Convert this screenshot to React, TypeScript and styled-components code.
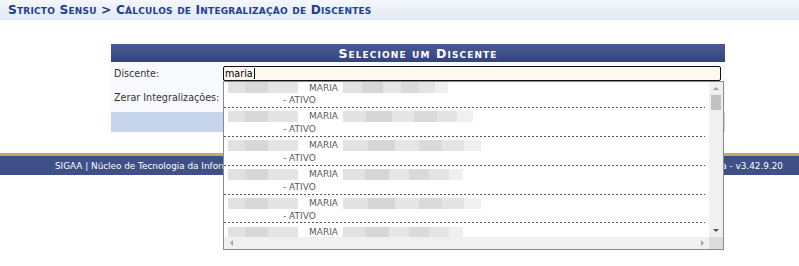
import React from 'react';
import styled, { createGlobalStyle } from 'styled-components';

const GlobalStyle = createGlobalStyle`
  html, body { margin: 0; padding: 0; background: #fff; }
  body {
    font-family: "DejaVu Sans", Verdana, sans-serif;
    font-size: 9.6px;
    color: #222;
  }
`;

const Page = styled.div`
  width: 799px;
  height: 266px;
  overflow: hidden;
  display: flex;
  flex-direction: column;
`;

const TopBar = styled.div`
  height: 20px;
  box-sizing: border-box;
  padding-left: 8px;
  display: flex;
  align-items: center;
  background: linear-gradient(#f4f7fc, #e1e9f5);
`;

const Title = styled.h2`
  margin: 0;
  font-size: 12.2px;
  font-weight: bold;
  font-variant: small-caps;
  letter-spacing: 0.2px;
  color: #21408a;
  white-space: nowrap;
`;

const FormTable = styled.div`
  margin: 24px 0 0 111px;
  width: 614px;
  background: #f8f9fc;
  position: relative;
  z-index: 2;
`;

const Caption = styled.div`
  height: 18px;
  display: flex;
  align-items: center;
  justify-content: center;
  background: linear-gradient(#4b5b93, #33447d);
  color: #fff;
  font-size: 12.5px;
  font-weight: bold;
  font-variant: small-caps;
  letter-spacing: 1.1px;
`;

const Row = styled.div<{ $h: number }>`
  height: ${p => p.$h}px;
  display: grid;
  grid-template-columns: 112px 1fr;
  align-items: center;
`;

const Label = styled.span`
  padding-left: 3px;
  color: #333;
  white-space: nowrap;
`;

const FieldWrap = styled.div`
  position: relative;
  width: 498px;
`;

const Field = styled.div`
  box-sizing: border-box;
  height: 15px;
  border: 1px solid #111;
  border-radius: 2px;
  background: #fdf9f1;
  padding-left: 1px;
  display: flex;
  align-items: center;
  color: #000;
`;

const Caret = styled.span`
  width: 1px;
  height: 11px;
  background: #000;
  margin-left: 1px;
`;

const TableFoot = styled.div`
  height: 20px;
  margin-top: 2px;
  background: #c6d4ec;
`;

const Dropdown = styled.div`
  position: absolute;
  top: 100%;
  left: 0;
  width: 501px;
  height: 169px;
  box-sizing: border-box;
  border: 1px solid #8a8a8a;
  background: #fff;
  display: grid;
  grid-template-columns: 1fr 14px;
  grid-template-rows: 1fr 12px;
  z-index: 5;
`;

const ListView = styled.div`
  overflow: hidden;
`;

const List = styled.ul`
  list-style: none;
  margin: -3px 0 0;
  padding: 0;
`;

const Item = styled.li`
  margin-right: 4px;
  padding: 2.6px 0 1.1px;
  line-height: 12.6px;
  font-size: 9px;
  color: #595959;
  background: repeating-linear-gradient(90deg, #555 0 2px, transparent 2px 4px) bottom / 100% 1px no-repeat;
`;

const NameLine = styled.div`
  display: flex;
  align-items: center;
  padding-left: 4px;
  white-space: nowrap;
`;

const StatusLine = styled.div`
  padding-left: 59px;
`;

const Redacted = styled.span<{ $w: number; $alt?: boolean }>`
  display: inline-block;
  width: ${p => p.$w}px;
  height: 11px;
  background: ${p =>
    p.$alt
      ? 'linear-gradient(90deg, #e2e2e2 0 18%, #d6d6d6 18% 38%, #e6e6e6 38% 55%, #dadada 55% 72%, #e4e4e4 72% 88%, #f0f0f0 88%)'
      : 'linear-gradient(90deg, #e1e1e1 0 25%, #d8d8d8 25% 57%, #e4e4e4 57%)'};
`;

const Given = styled.span`
  margin: 0 5px 0 11px;
`;

const VScroll = styled.div`
  background: #f0f0f0;
  display: flex;
  flex-direction: column;
  align-items: center;
`;

const HScroll = styled.div`
  background: #f0f0f0;
  display: flex;
  align-items: center;
  justify-content: space-between;
  padding: 0 5px 0 6px;
`;

const Corner = styled.div`
  background: #dcdcdc;
`;

const ArrowBox = styled.div`
  height: 13px;
  width: 100%;
  display: flex;
  align-items: center;
  justify-content: center;
`;

const Thumb = styled.div`
  width: 10px;
  height: 15px;
  background: #c1c1c1;
`;

const Spacer = styled.div`
  flex: 1;
`;

const Tri = styled.span<{ $dir: 'up' | 'down' | 'left' | 'right'; $dark?: boolean }>`
  width: 0;
  height: 0;
  border: 3px solid transparent;
  ${p => {
    const c = p.$dark ? '#505050' : '#a3a3a3';
    switch (p.$dir) {
      case 'up': return `border-bottom: 3px solid ${c}; border-top-width: 0;`;
      case 'down': return `border-top: 3px solid ${c}; border-bottom-width: 0;`;
      case 'left': return `border-right: 3px solid ${c}; border-left-width: 0;`;
      default: return `border-left: 3px solid ${c}; border-right-width: 0;`;
    }
  }}
`;

const Footer = styled.div`
  margin-top: 21px;
  height: 19px;
  border-top: 3px solid #c9a66c;
  background: #3f4f87;
  color: #fff;
  font-size: 8.85px;
  display: flex;
  align-items: center;
  padding-left: 55px;
  white-space: nowrap;
  overflow: hidden;
`;

const results = [105, 130, 138, 120, 138, 120];

const App: React.FC = () => (
  <Page>
    <GlobalStyle />
    <TopBar>
      <Title>Stricto Sensu &gt; Cálculos de Integralização de Discentes</Title>
    </TopBar>

    <FormTable>
      <Caption>Selecione um Discente</Caption>
      <Row $h={23}>
        <Label>Discente:</Label>
        <FieldWrap>
          <Field>
            maria<Caret />
          </Field>
          <Dropdown>
            <ListView>
              <List>
                {results.map((w, i) => (
                  <Item key={i}>
                    <NameLine>
                      <Redacted $w={70} />
                      <Given>MARIA</Given>
                      <Redacted $w={w} $alt />
                    </NameLine>
                    <StatusLine>- ATIVO</StatusLine>
                  </Item>
                ))}
              </List>
            </ListView>
            <VScroll>
              <ArrowBox><Tri $dir="up" /></ArrowBox>
              <Thumb />
              <Spacer />
              <ArrowBox><Tri $dir="down" $dark /></ArrowBox>
            </VScroll>
            <HScroll>
              <Tri $dir="left" />
              <Tri $dir="right" />
            </HScroll>
            <Corner />
          </Dropdown>
        </FieldWrap>
      </Row>
      <Row $h={25}>
        <Label>Zerar Integralizações:</Label>
        <span />
      </Row>
      <TableFoot />
    </FormTable>

    <Footer>
      SIGAA | Núcleo de Tecnologia da Informação - STI/UFRN - (84) 3342 2210 - Copyright © 2006-2025 - UFRN - sigaa.ufrn.br - producao-sigaa.ufrn.br.sigaa - v3.42.9.20
    </Footer>
  </Page>
);

export default App;
